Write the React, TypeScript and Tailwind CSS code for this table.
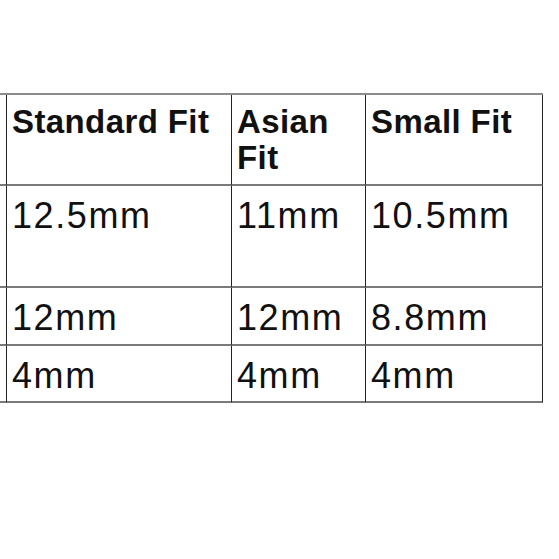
import React from "react";

const rows: { h: string; cells: string[] }[] = [
  { h: "h-[102px]", cells: ["12.5mm", "11mm", "10.5mm"] },
  { h: "h-[58px]", cells: ["12mm", "12mm", "8.8mm"] },
  { h: "h-[57px]", cells: ["4mm", "4mm", "4mm"] },
];

const headers = ["Standard Fit", "Asian Fit", "Small Fit"];

export default function App() {
  return (
    <div className="w-[559px] h-[559px] bg-white overflow-hidden font-['Liberation_Sans',Arial,sans-serif] text-[#111]">
      <div className="mt-[93px] w-[543px] grid grid-cols-[7px_225px_134px_177px] border-t-2 border-[#8c8c8c]">
        <div className="h-[91px] border-b-2 border-b-[#7a7a7a] border-r border-r-[#222]" />
        {headers.map((t) => (
          <div
            key={t}
            className="h-[91px] border-b-2 border-b-[#7a7a7a] border-r border-r-[#222] pl-[5px] pt-[9px] text-[33px] leading-[36px] font-bold tracking-[0.4px]"
          >
            {t}
          </div>
        ))}
        {rows.map((r, i) => (
          <React.Fragment key={i}>
            <div className={`${r.h} border-b-2 border-b-[#7a7a7a] border-r border-r-[#222]`} />
            {r.cells.map((c, j) => (
              <div
                key={j}
                className={`${r.h} border-b-2 border-b-[#7a7a7a] border-r border-r-[#222] pl-[5px] pt-[10px] text-[36px] leading-[40px] tracking-[1.6px]`}
              >
                {c}
              </div>
            ))}
          </React.Fragment>
        ))}
      </div>
    </div>
  );
}
